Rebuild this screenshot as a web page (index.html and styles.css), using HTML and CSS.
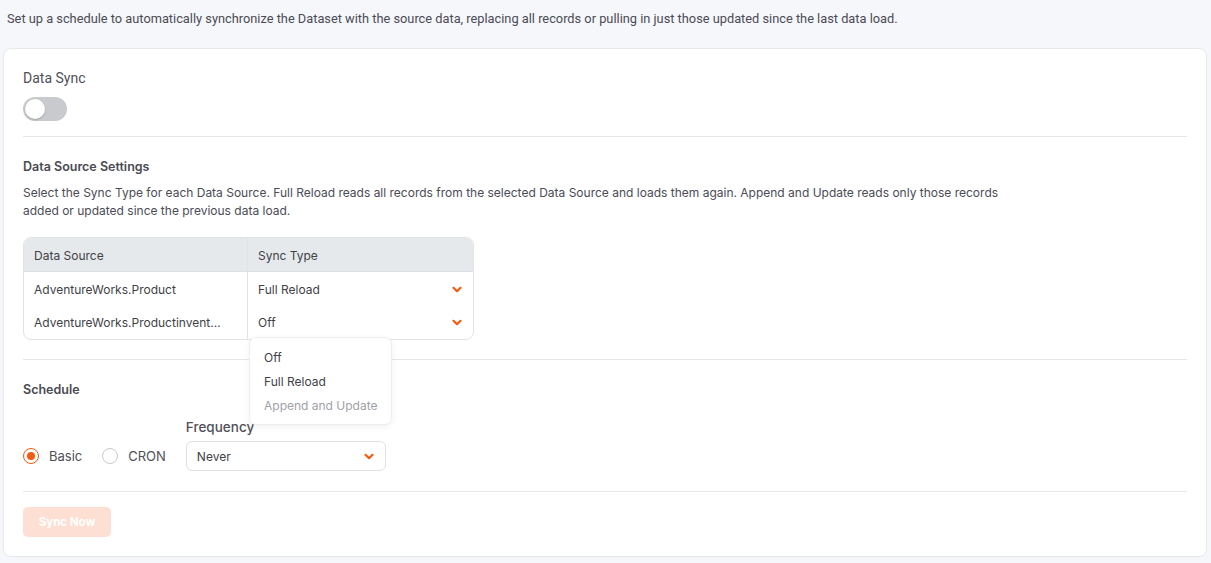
FILE: index.html
```html
<!DOCTYPE html>
<html>
<head>
<meta charset="utf-8">
<link rel="stylesheet" href="styles.css">
</head>
<body>
<p class="intro">Set up a schedule to automatically synchronize the Dataset with the source data, replacing all records or pulling in just those updated since the last data load.</p>
<div class="card">
  <section class="sec sec-sync">
    <div class="label">Data Sync</div>
    <div class="toggle"><span class="knob"></span></div>
  </section>
  <section class="sec sec-src">
    <div class="title">Data Source Settings</div>
    <p class="desc">Select the Sync Type for each Data Source. Full Reload reads all records from the selected Data Source and loads them again. Append and Update reads only those records added or updated since the previous data load.</p>
    <div class="table-wrap">
      <div class="table">
        <div class="row head">
          <div class="cell c1">Data Source</div>
          <div class="cell c2">Sync Type</div>
        </div>
        <div class="row first">
          <div class="cell c1">AdventureWorks.Product</div>
          <div class="cell c2"><span>Full Reload</span><svg class="chev" viewBox="0 0 10 7" width="10" height="7"><path d="M1.5 1.8l3.5 3.4 3.5-3.4" fill="none" stroke="#f75a10" stroke-width="2.2" stroke-linecap="round" stroke-linejoin="round"/></svg></div>
        </div>
        <div class="row last">
          <div class="cell c1">AdventureWorks.Productinvent...</div>
          <div class="cell c2"><span>Off</span><svg class="chev" viewBox="0 0 10 7" width="10" height="7"><path d="M1.5 1.8l3.5 3.4 3.5-3.4" fill="none" stroke="#f75a10" stroke-width="2.2" stroke-linecap="round" stroke-linejoin="round"/></svg></div>
        </div>
      </div>
      <div class="menu">
        <div class="opt">Off</div>
        <div class="opt">Full Reload</div>
        <div class="opt disabled">Append and Update</div>
      </div>
    </div>
  </section>
  <section class="sec sec-sched">
    <div class="title">Schedule</div>
    <div class="sched-row">
      <label class="radio checked"><span class="dot"></span>Basic</label>
      <label class="radio"><span class="dot"></span>CRON</label>
      <div class="field">
        <div class="field-label">Frequency</div>
        <div class="select"><span>Never</span><svg class="chev" viewBox="0 0 10 7" width="10" height="7"><path d="M1.5 1.8l3.5 3.4 3.5-3.4" fill="none" stroke="#f75a10" stroke-width="2.2" stroke-linecap="round" stroke-linejoin="round"/></svg></div>
      </div>
    </div>
  </section>
  <section class="sec sec-btn">
    <button class="btn">Sync Now</button>
  </section>
</div>
</body>
</html>
```
FILE: styles.css
```css
* { box-sizing: border-box; }
html, body { margin: 0; padding: 0; }
body {
  background: #f6f7fa;
  font-family: Inter, "Noto Sans", sans-serif;
  color: #3f3f46;
  width: 1211px;
  height: 563px;
  overflow: hidden;
}
.intro {
  margin: 0;
  padding: 11px 7px 0;
  height: 48px;
  font-family: Roboto, sans-serif;
  font-size: 12.8px;
  color: #4b4b55;
  line-height: 16px;
}
.card {
  margin: 0 4px 0 3px;
  background: #fff;
  border: 1px solid #e6e8ec;
  border-radius: 8px;
  padding: 0 19px;
  height: 509px;
}
.sec { border-bottom: 1px solid #e5e7eb; }
.sec-sync { padding: 20px 0 15px; }
.label {
  font-family: Roboto, sans-serif;
  font-size: 14px;
  color: #505058;
  line-height: 18px;
}
.toggle {
  margin-top: 10px;
  width: 44px;
  height: 24px;
  border-radius: 12px;
  background: #c9cacd;
  position: relative;
}
.knob {
  position: absolute;
  left: 2px;
  top: 2px;
  width: 20px;
  height: 20px;
  border-radius: 50%;
  background: #fff;
  box-shadow: 0 1px 2px rgba(0,0,0,.2);
}
.sec-src { padding: 22px 0 19px; }
.title {
  font-size: 12.5px;
  font-weight: 600;
  color: #4a4a52;
  line-height: 16px;
}
.desc {
  margin: 9px 0 0;
  font-size: 12px;
  line-height: 18px;
  color: #4b4b55;
  max-width: 990px;
}
.table-wrap { position: relative; margin-top: 17px; }
.table {
  width: 451px;
  border: 1px solid #e1e3e7;
  border-radius: 8px;
  overflow: hidden;
  font-size: 12px;
  color: #3f3f46;
}
.row { display: flex; }
.row.head { background: #e6e9ec; height: 34px; border-bottom: 1px solid #dde0e4; }
.row.head .cell { padding-top: 1px; }
.row.first { height: 34px; }
.row.last { height: 33px; }
.cell { display: flex; align-items: center; padding-left: 10px; }
.c1 { width: 224px; border-right: 1px solid #e1e3e7; }
.c2 { flex: 1; justify-content: space-between; padding-right: 11px; }
.row.first .cell { padding-top: 1px; }
.row.last .cell { padding-bottom: 1px; }
.chev { display: block; }
.menu {
  position: absolute;
  left: 226px;
  top: 100px;
  width: 143px;
  height: 88px;
  background: #fff;
  border: 1px solid #eceef1;
  border-radius: 7px;
  box-shadow: 0 2px 6px rgba(0,0,0,.06);
  padding: 10px 0 0 14px;
  font-size: 12px;
  z-index: 2;
}
.opt { height: 24px; line-height: 20px; color: #3f3f46; }
.opt.disabled { color: #a1a1a8; }
.sec-sched { padding: 22px 0 20px; }
.sched-row {
  display: flex;
  align-items: flex-end;
  margin-top: 21px;
}
.radio {
  display: flex;
  align-items: center;
  height: 30px;
  font-size: 13px;
  color: #505058;
  margin-right: 20px;
}
.radio .dot {
  width: 16px;
  height: 16px;
  border-radius: 50%;
  border: 1px solid #c9cacd;
  margin-right: 10px;
  position: relative;
}
.radio.checked .dot { border-color: #f75a10; }
.radio.checked .dot::after {
  content: "";
  position: absolute;
  left: 3px; top: 3px;
  width: 8px; height: 8px;
  border-radius: 50%;
  background: #f75a10;
}
.field-label {
  font-size: 13.5px;
  font-weight: 500;
  color: #505058;
  line-height: 16px;
  margin-bottom: 6px;
}
.select {
  width: 200px;
  height: 30px;
  border: 1px solid #dfe1e5;
  border-radius: 6px;
  display: flex;
  align-items: center;
  justify-content: space-between;
  padding: 0 11px 0 10px;
  font-size: 12px;
  color: #3f3f46;
}
.sec-btn { border-bottom: none; padding-top: 15px; }
.btn {
  width: 88px;
  height: 30px;
  border: none;
  border-radius: 5px;
  background: #fde0d3;
  color: #fff;
  font-family: Inter, sans-serif;
  font-weight: 700;
  font-size: 11.5px;
}
```
